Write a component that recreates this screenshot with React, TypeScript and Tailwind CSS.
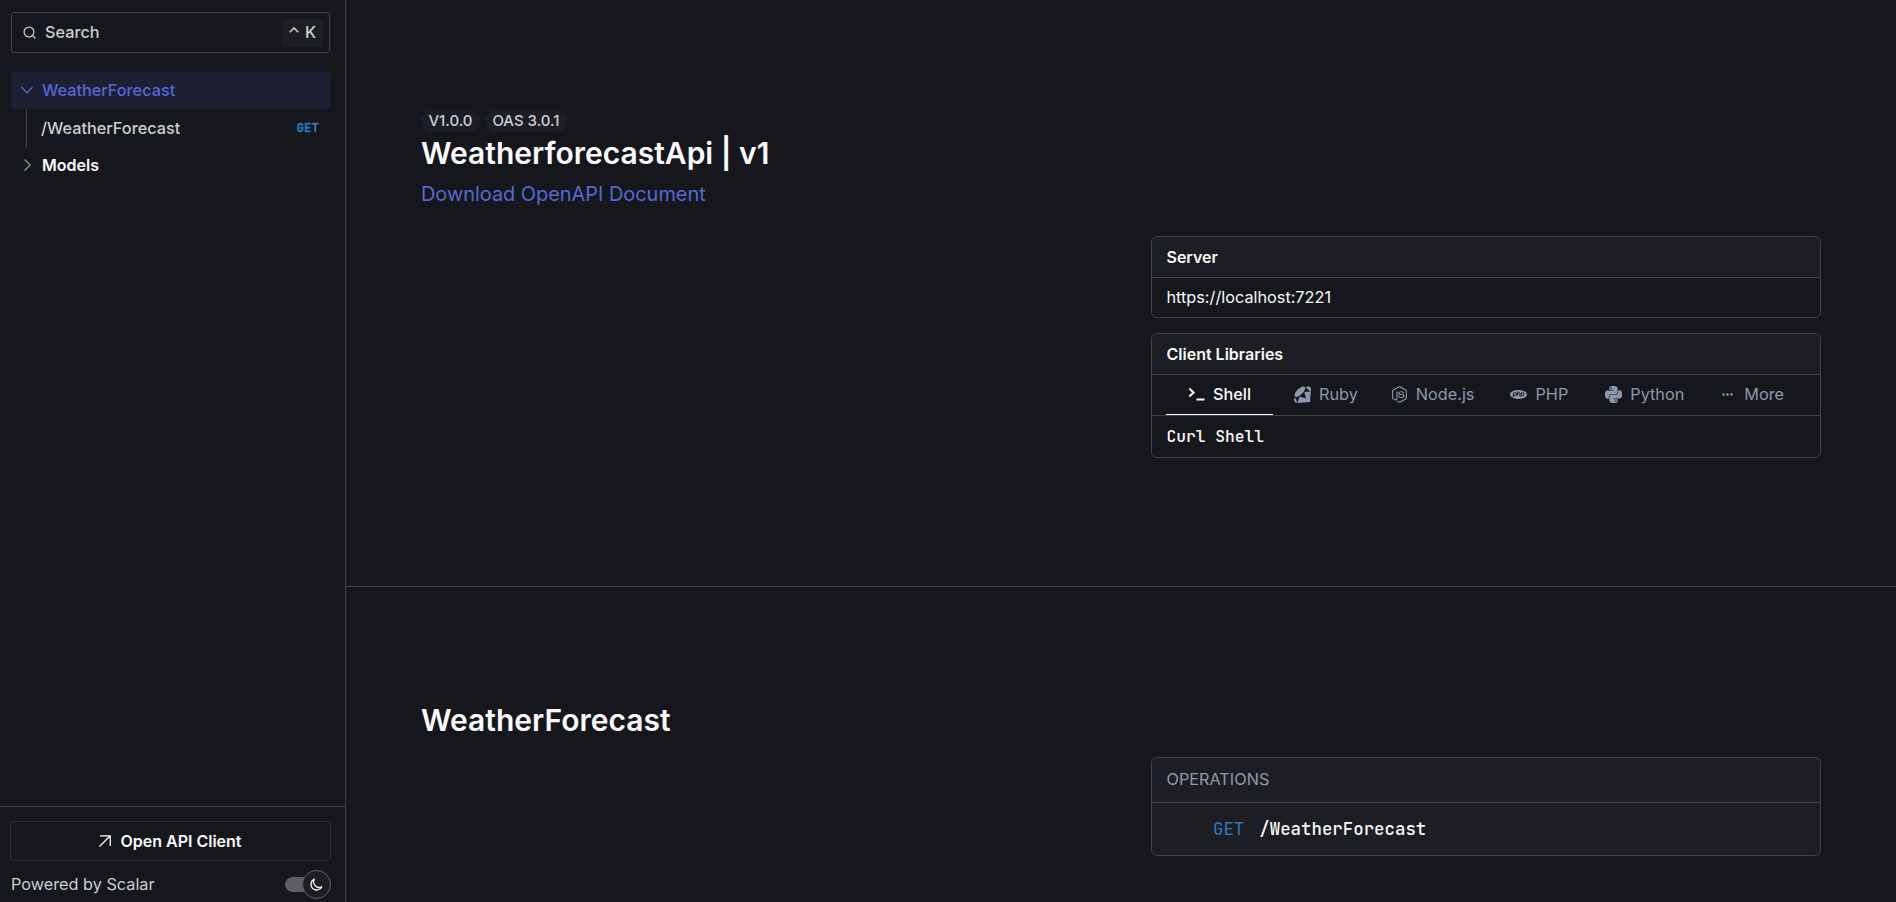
import type { ReactNode } from 'react';
import { SiRuby, SiPhp, SiPython } from 'react-icons/si';
import { FaNodeJs } from 'react-icons/fa';

const mono = "font-['JetBrains_Mono','DejaVu_Sans_Mono',monospace]";

function Card({ title, children, className = '' }: { title: ReactNode; children: ReactNode; className?: string }) {
  return (
    <section className={`flex w-[670px] flex-col overflow-hidden rounded-md border border-[#3f4145] ${className}`}>
      {title}
      {children}
    </section>
  );
}

function CardTitle({ children }: { children: ReactNode }) {
  return (
    <h3 className="flex h-[41px] items-center border-b border-[#3f4145] bg-[#1d1e23] pl-[14.500px] text-[16px] font-semibold text-[#fafafa]">
      {children}
    </h3>
  );
}

function Sidebar() {
  return (
    <aside className="flex w-[346px] shrink-0 flex-col border-r border-[#3f4145] text-[16.250px] font-medium">
      <div className="px-[11px] pt-3">
        <button className="flex h-[41px] w-[319px] items-center rounded-[3px] border border-[#3f4145] pl-[11px] pr-1.5 text-[#c9ced8]">
          <svg className="size-[13px]" viewBox="0 0 13 13" fill="none" stroke="currentColor" strokeWidth="1.2" strokeLinecap="round">
            <circle cx="6" cy="6" r="4.9" />
            <path d="M9.5 9.5 12 12" />
          </svg>
          <span className="ml-[9px] pb-px">Search</span>
          <span className="ml-auto flex h-7 w-[41px] items-center justify-center gap-1.5 rounded bg-[#1d1e23]">
            <svg className="mb-1.5 h-[6px] w-[10px]" viewBox="0 0 10 6" fill="none" stroke="currentColor" strokeWidth="1.6">
              <path d="M.8 5.2 5 1l4.2 4.2" />
            </svg>
            <span className="pb-px">K</span>
          </span>
        </button>
      </div>
      <nav className="mt-[19px] px-[11px]">
        <div className="flex h-[37px] w-[319px] items-center rounded bg-[#1d2032] pl-[10px] text-[#5469d4]">
          <svg className="mb-px h-3 w-3" viewBox="0 0 12 12" fill="none" stroke="currentColor" strokeWidth="1.2">
            <path d="M.5 3 6 8.8 11.500 3" />
          </svg>
          <span className="ml-[9px] pb-px">WeatherForecast</span>
        </div>
        <div className="ml-[15px] flex h-[38px] w-[304px] items-center border-l border-[#3f4145] pl-[14px] pr-[11px] text-[#c9ced8]">
          /WeatherForecast
          <span className={`ml-auto text-[12.500px] font-bold text-[#2b7abf] [-webkit-text-stroke:0.3px_#2b7abf] ${mono}`}>GET</span>
        </div>
        <div className="flex h-[37px] items-center pl-[10px] text-[#fafafa]">
          <svg className="mb-px h-3 w-3" viewBox="0 0 12 12" fill="none" stroke="#8c99ad" strokeWidth="1.2">
            <path d="M3.500.5 9.300 6 3.500 11.500" />
          </svg>
          <span className="ml-[9px] pb-px text-[16px] font-semibold">Models</span>
        </div>
      </nav>
      <footer className="mt-auto h-[96px] border-t border-[#3f4145] px-[10px] pt-[14px]">
        <button className="flex h-10 w-[321px] items-center justify-center gap-[9px] rounded border border-[#2d2f34] text-[16px] font-semibold text-[#fafafa]">
          <svg className="size-3" viewBox="0 0 12 12" fill="none" stroke="currentColor" strokeWidth="1.3">
            <path d="M1 .8h10.300V11M11.300.8.5 11.500" />
          </svg>
          Open API Client
        </button>
        <div className="mt-[9px] flex h-[29px] w-[321px] items-center justify-between pl-px font-normal text-[#c9ced8]">
          <span className="pb-px">Powered by Scalar</span>
          <div className="flex h-[15px] w-[46px] items-center justify-end rounded-full bg-[#5d5f65]">
            <span className="flex size-[29px] shrink-0 items-center justify-center rounded-full border border-[#5d5f65] bg-[#1d1e23]">
              <svg className="size-[13px]" viewBox="0 0 14 14" fill="none" stroke="#fafafa" strokeWidth="1.4" strokeLinejoin="round">
                <path d="M4.600 1.300A6.100 6.100 0 1 0 12.700 9.400 6 6 0 0 1 4.600 1.300Z" />
              </svg>
            </span>
          </div>
        </div>
      </footer>
    </aside>
  );
}

export default function App() {
  return (
    <div className="flex h-[902px] w-[1896px] overflow-hidden bg-[#16171c] font-['Inter',sans-serif] text-[#fafafa]">
      <Sidebar />
      <main className="flex flex-1 flex-col">
        <section className="h-[587px] border-b border-[#3f4145] pl-[75px] pt-[110px]">
          <div className="flex gap-[5px] text-[15px] font-medium leading-none text-[#c9ced8]">
            <span className="flex h-[22px] w-[59px] items-center justify-center rounded-full bg-[#1d1e23] pb-px">V1.0.0</span>
            <span className="flex h-[22px] w-[82px] items-center justify-center rounded-full bg-[#1d1e23] pb-px">OAS 3.0.1</span>
          </div>
          <h1 className="text-[30px] font-semibold leading-[42px]">WeatherforecastApi | v1</h1>
          <a className="mt-[5px] block text-[20px] leading-[30px] tracking-[-0.06px] text-[#5469d4]">Download OpenAPI Document</a>
          <div className="ml-[730px] mt-[27px] flex flex-col gap-[15px]">
            <Card title={<CardTitle>Server</CardTitle>}>
              <p className="h-[39px] pl-[14.500px] text-[16.250px] leading-[39px]">https://localhost:7221</p>
            </Card>
            <Card title={<CardTitle>Client Libraries</CardTitle>}>
              <div className="flex h-[41px] border-b border-[#3f4145] pl-[14px] text-[16.250px] text-[#8c99ad]">
                <div className="flex w-[107px] items-center border-b border-[#fafafa] pl-[22px] font-medium text-[#fafafa]">
                  <svg className="h-[17px] w-[17px]" viewBox="0 0 17 17" fill="none" stroke="currentColor" strokeWidth="2">
                    <path d="M1.300 2.500 5.600 6.500 1.300 10.500M8.500 13.500h8" />
                  </svg>
                  <span className="ml-2 pb-px">Shell</span>
                </div>
                <div className="ml-[21px] flex items-center gap-2 pb-px"><SiRuby className="size-[17px]" />Ruby</div>
                <div className="ml-[33px] flex items-center gap-2 pb-px"><FaNodeJs className="size-[17px]" />Node.js</div>
                <div className="ml-[36px] flex items-center gap-2 pb-px"><SiPhp className="size-[17px]" />PHP</div>
                <div className="ml-[37px] flex items-center gap-2 pb-px"><SiPython className="size-[17px]" />Python</div>
                <div className="ml-[35px] flex items-center gap-2 pb-px">
                  <svg className="size-[17px]" viewBox="0 0 17 17" fill="currentColor">
                    <circle cx="4.500" cy="8.500" r="1.300" /><circle cx="8.500" cy="8.500" r="1.300" /><circle cx="12.500" cy="8.500" r="1.300" />
                  </svg>
                  More
                </div>
              </div>
              <p className={`h-[41px] pl-[14.500px] text-[16.250px] font-medium leading-[41px] ${mono}`}>Curl Shell</p>
            </Card>
          </div>
        </section>
        <section className="pl-[75px] pt-[112px]">
          <h2 className="text-[30px] font-semibold leading-[42px]">WeatherForecast</h2>
          <Card
            className="ml-[730px] mt-[16px] bg-[#1d1e23]"
            title={<h3 className="h-[45px] border-b border-[#3f4145] pl-[14.500px] text-[16.250px] leading-[43px] text-[#8c99ad]">OPERATIONS</h3>}
          >
            <div className={`flex h-[52px] items-center gap-[15px] pl-[61px] pt-px text-[17.400px] ${mono}`}>
              <span className="text-[#2b7abf]">GET</span>
              <span className="font-medium">/WeatherForecast</span>
            </div>
          </Card>
        </section>
      </main>
    </div>
  );
}
